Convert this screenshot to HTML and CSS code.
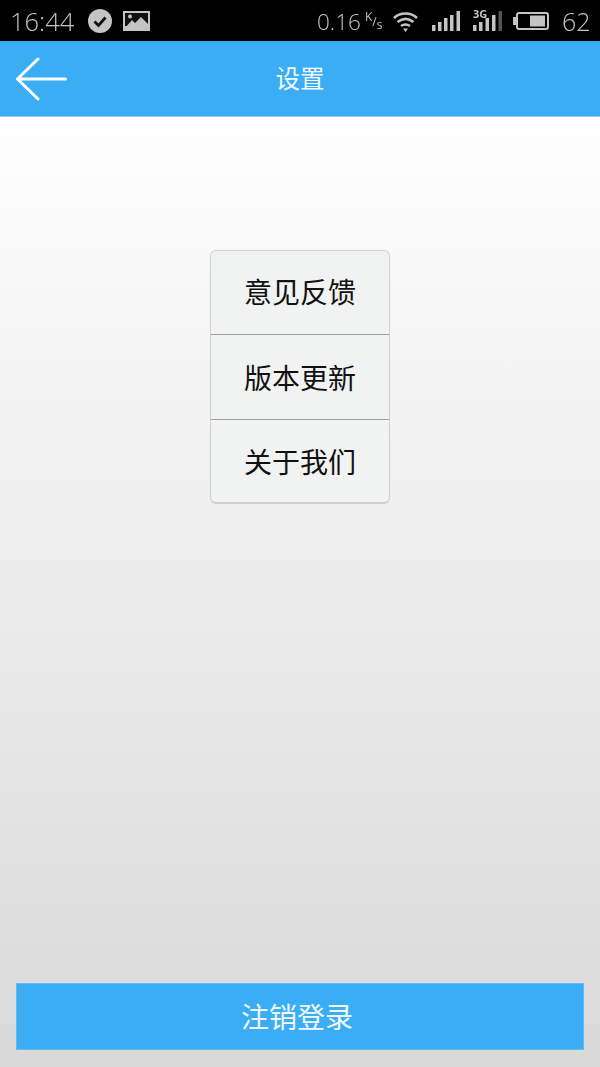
FILE: index.html
```html
<!DOCTYPE html>
<html lang="zh-CN">
<head>
    <meta charset="UTF-8">
    <meta name="viewport" content="width=device-width, initial-scale=1.0">
    <title>设置</title>
    <link rel="stylesheet" href="styles.css">
</head>
<body>
    <div class="statusbar">
        <div class="status-left">
            <span class="clock">16:44</span>
            <svg class="ico-check" width="24" height="24" viewBox="0 0 24 24">
                <circle cx="12" cy="12" r="12" fill="#c4c4c4"/>
                <path d="M6.500 12.500l4 4 7-8" fill="none" stroke="#111" stroke-width="2.800"/>
            </svg>
            <svg class="ico-pic" width="27" height="20" viewBox="0 0 27 20">
                <rect width="27" height="20" fill="#c4c4c4"/>
                <rect x="2" y="2" width="23" height="13" fill="#111"/>
                <circle cx="7" cy="5.500" r="2" fill="#c4c4c4"/>
                <path d="M2 17l7-8 3 3 6-6 7 7v4z" fill="#c4c4c4"/>
            </svg>
        </div>
        <div class="status-right">
            <span class="speed">0.16</span>
            <span class="unit"><sup>K</sup>/<sub>s</sub></span>
            <svg class="ico-wifi" width="25" height="21" viewBox="0 0 25 21">
                <path d="M1 7C7 1 18 1 24 7M4.500 11c5-4 11-4 16 0M8 15c3-2 6-2 9 0" fill="none" stroke="#c4c4c4" stroke-width="2.600"/>
                <path d="M10 17.500h5L12.500 21z" fill="#c4c4c4"/>
            </svg>
            <svg class="ico-bars" width="28" height="20" viewBox="0 0 28 20">
                <rect x="0" y="14" width="3.500" height="6" fill="#c4c4c4"/>
                <rect x="6" y="11" width="3.500" height="9" fill="#c4c4c4"/>
                <rect x="12" y="7" width="3.500" height="13" fill="#c4c4c4"/>
                <rect x="18" y="4" width="3.500" height="16" fill="#c4c4c4"/>
                <rect x="24.500" y="0" width="3.500" height="20" fill="#c4c4c4"/>
            </svg>
            <div class="net">
                <span class="net-label">3G</span>
                <svg width="29" height="20" viewBox="0 0 29 20">
                    <rect x="0" y="14" width="3.500" height="6" fill="#c4c4c4"/>
                    <rect x="6" y="11" width="3.500" height="9" fill="#c4c4c4"/>
                    <rect x="12.500" y="7" width="3.500" height="13" fill="#c4c4c4"/>
                    <rect x="19" y="4" width="3.500" height="16" fill="#c4c4c4"/>
                    <rect x="25.500" y="0" width="3.500" height="20" fill="#555"/>
                </svg>
            </div>
            <svg class="ico-batt" width="36" height="18" viewBox="0 0 36 18">
                <rect x="0" y="5" width="3" height="8" fill="#c4c4c4"/>
                <rect x="4" y="1" width="31" height="16" rx="2" fill="none" stroke="#c4c4c4" stroke-width="2"/>
                <rect x="17" y="3.500" width="15" height="11" fill="#c4c4c4"/>
            </svg>
            <span class="level">62</span>
        </div>
    </div>

    <header class="topbar">
        <svg class="back" width="52" height="44" viewBox="0 0 52 44">
            <path d="M22 2L1.500 22 22 42M1.500 22h48" fill="none" stroke="#fff" stroke-width="3" stroke-linecap="round" stroke-linejoin="round"/>
        </svg>
        <h1 class="title">设置</h1>
    </header>

    <main class="content">
        <ul class="menu">
            <li class="menu-item">意见反馈</li>
            <li class="menu-item">版本更新</li>
            <li class="menu-item">关于我们</li>
        </ul>
        <button type="button" class="logout">注销登录</button>
    </main>
</body>
</html>
```

FILE: styles.css
```css
* {
    box-sizing: border-box;
}

html,
body {
    margin: 0;
    padding: 0;
}

body {
    width: 600px;
    height: 1067px;
    display: flex;
    flex-direction: column;
    font-family: "Noto Sans CJK SC", "Liberation Sans", sans-serif;
    overflow: hidden;
}

.statusbar {
    height: 41px;
    flex: none;
    display: flex;
    justify-content: space-between;
    align-items: center;
    padding: 0 10px 0 10px;
    background: #000;
    color: #c4c4c4;
    font-family: "Open Sans", "Liberation Sans", sans-serif;
    font-weight: 300;
}

.status-left,
.status-right {
    display: flex;
    align-items: center;
    will-change: transform;
}

.clock {
    font-size: 25.500px;
}

.ico-check {
    margin-left: 14px;
}

.ico-pic {
    margin-left: 11px;
}

.speed {
    font-size: 22.500px;
}

.unit {
    font-size: 12px;
    font-weight: 400;
    margin-left: 4px;
    width: 17px;
}

.unit sup,
.unit sub {
    font-size: 12px;
}

.ico-wifi {
    margin-left: 11px;
}

.ico-bars {
    margin-left: 14px;
}

.net {
    position: relative;
    margin-left: 13px;
}

.net svg {
    display: block;
}

.net-label {
    position: absolute;
    left: 0;
    top: -2px;
    font-size: 11px;
    font-weight: 700;
    line-height: 10px;
}

.ico-batt {
    margin-left: 11px;
}

.level {
    font-size: 25px;
    margin-left: 13px;
}

.topbar {
    height: 76px;
    flex: none;
    position: relative;
    display: flex;
    align-items: center;
    justify-content: center;
    padding-bottom: 2px;
    background: #3badf5;
    border-bottom: 1px solid #8fcdf6;
}

.back {
    position: absolute;
    left: 16px;
    top: 16px;
}

.title {
    margin: 0;
    font-size: 24.500px;
    font-weight: 400;
    color: #f2f9fe;
}

.content {
    flex: 1;
    display: flex;
    flex-direction: column;
    align-items: center;
    padding: 133px 16px 17px;
    background: linear-gradient(#fefefe, #d9d9d9);
}

.menu {
    width: 180px;
    margin: 0;
    padding: 0;
    list-style: none;
    background: #f1f2f2;
    border: 1px solid #d0d0d0;
    border-bottom-width: 2px;
    border-radius: 6px;
}

.menu-item {
    height: 85px;
    display: flex;
    align-items: center;
    justify-content: center;
    font-size: 28px;
    color: #111;
    border-bottom: 1px solid #a0a0a0;
}

.menu-item:first-child {
    height: 84px;
    padding-bottom: 3px;
}

.menu-item:last-child {
    height: 82px;
    padding-bottom: 1px;
    border-bottom: 0;
}

.logout {
    width: 568px;
    height: 67px;
    margin-top: auto;
    padding: 0 6px 2px 0;
    border: 1px solid #5fbbf6;
    background: #3badf5;
    color: #f2f9fe;
    font-family: inherit;
    font-size: 28px;
}
```
